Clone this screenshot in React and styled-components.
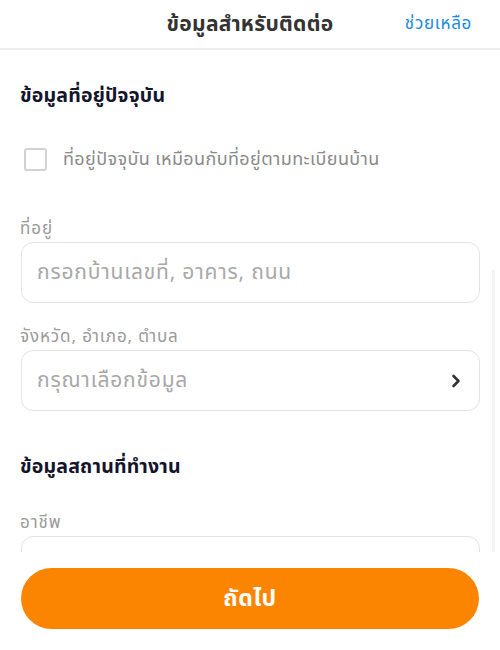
import React from "react";
import styled, { createGlobalStyle } from "styled-components";

const GlobalStyle = createGlobalStyle`
  html, body {
    margin: 0;
    padding: 0;
    background: #ffffff;
    font-family: "Noto Sans Thai", "Noto Sans", "DejaVu Sans", sans-serif;
  }
  * { box-sizing: border-box; }
`;

const Page = styled.div`
  width: 500px;
  height: 650px;
  overflow: hidden;
  position: relative;
  background: #fff;
`;

const Header = styled.header`
  height: 50px;
  display: flex;
  align-items: center;
  justify-content: center;
  position: relative;
  border-bottom: 2px solid #ececec;
`;

const Title = styled.h1`
  margin: 0;
  font-size: 21px;
  font-weight: 700;
  letter-spacing: 0.3px;
  color: #333;
`;

const HelpLink = styled.a`
  position: absolute;
  right: 28px;
  top: 50%;
  transform: translateY(-50%);
  font-size: 17px;
  letter-spacing: 0.7px;
  color: #1a8ae0;
  text-decoration: none;
`;

const Body = styled.main`
  padding: 28px 20px 0 20px;
  display: flex;
  flex-direction: column;
`;

const SectionTitle = styled.h2`
  margin: 0 0 ${(p) => p.$gap || 0}px 0;
  font-size: 19.5px;
  font-weight: 700;
  letter-spacing: 0.2px;
  color: #14142b;
  line-height: 36px;
`;

const CheckRow = styled.label`
  display: flex;
  align-items: center;
  gap: 16px;
  padding-left: 4px;
  margin-bottom: 45px;
`;

const Box = styled.span`
  width: 23px;
  height: 23px;
  border: 2px solid #d2d2d2;
  border-radius: 3px;
  flex-shrink: 0;
`;

const CheckText = styled.span`
  font-size: 18px;
  letter-spacing: 0.4px;
  color: #8a8a8a;
`;

const Field = styled.div`
  display: flex;
  flex-direction: column;
  gap: 2px;
  margin-bottom: ${(p) => p.$mb || 0}px;
`;

const Label = styled.span`
  font-size: 17px;
  letter-spacing: 0.9px;
  color: #9a9a9a;
  line-height: 22px;
`;

const InputBox = styled.div`
  height: 61px;
  border: 1px solid #e3e3e3;
  border-radius: 12px;
  padding: 0 17px 0 15px;
  display: flex;
  align-items: center;
  justify-content: space-between;
  margin-left: 1px;
`;

const Placeholder = styled.span`
  font-size: 21px;
  letter-spacing: 0.8px;
  color: #a8a8a8;
`;

const Footer = styled.div`
  position: absolute;
  left: 0;
  right: 0;
  bottom: 0;
  height: 98px;
  background: #fff;
  padding: 16px 21px 0 21px;
`;

const NextButton = styled.button`
  width: 100%;
  height: 61px;
  border: none;
  border-radius: 31px;
  background: #fb8500;
  color: #fff;
  font-family: inherit;
  font-size: 23px;
  font-weight: 700;
  letter-spacing: 0.5px;
`;

const Scrollbar = styled.div`
  position: absolute;
  right: 5px;
  top: 270px;
  bottom: 0;
  width: 3px;
  background: #f4f4f4;
`;

function Chevron() {
  return (
    <svg width="12" height="16" viewBox="0 0 12 16" fill="none">
      <path
        d="M3.5 3L8.5 8L3.5 13"
        stroke="#333"
        strokeWidth="2.6"
        strokeLinecap="round"
        strokeLinejoin="round"
      />
    </svg>
  );
}

export default function App() {
  return (
    <Page>
      <GlobalStyle />
      <Header>
        <Title>ข้อมูลสำหรับติดต่อ</Title>
        <HelpLink href="#">ช่วยเหลือ</HelpLink>
      </Header>
      <Body>
        <SectionTitle $gap={32}>ข้อมูลที่อยู่ปัจจุบัน</SectionTitle>
        <CheckRow>
          <Box />
          <CheckText>ที่อยู่ปัจจุบัน เหมือนกับที่อยู่ตามทะเบียนบ้าน</CheckText>
        </CheckRow>
        <Field $mb={23}>
          <Label>ที่อยู่</Label>
          <InputBox>
            <Placeholder>กรอกบ้านเลขที่, อาคาร, ถนน</Placeholder>
          </InputBox>
        </Field>
        <Field $mb={38}>
          <Label>จังหวัด, อำเภอ, ตำบล</Label>
          <InputBox>
            <Placeholder>กรุณาเลือกข้อมูล</Placeholder>
            <Chevron />
          </InputBox>
        </Field>
        <SectionTitle $gap={27}>ข้อมูลสถานที่ทำงาน</SectionTitle>
        <Field>
          <Label>อาชีพ</Label>
          <InputBox />
        </Field>
      </Body>
      <Scrollbar />
      <Footer>
        <NextButton>ถัดไป</NextButton>
      </Footer>
    </Page>
  );
}
